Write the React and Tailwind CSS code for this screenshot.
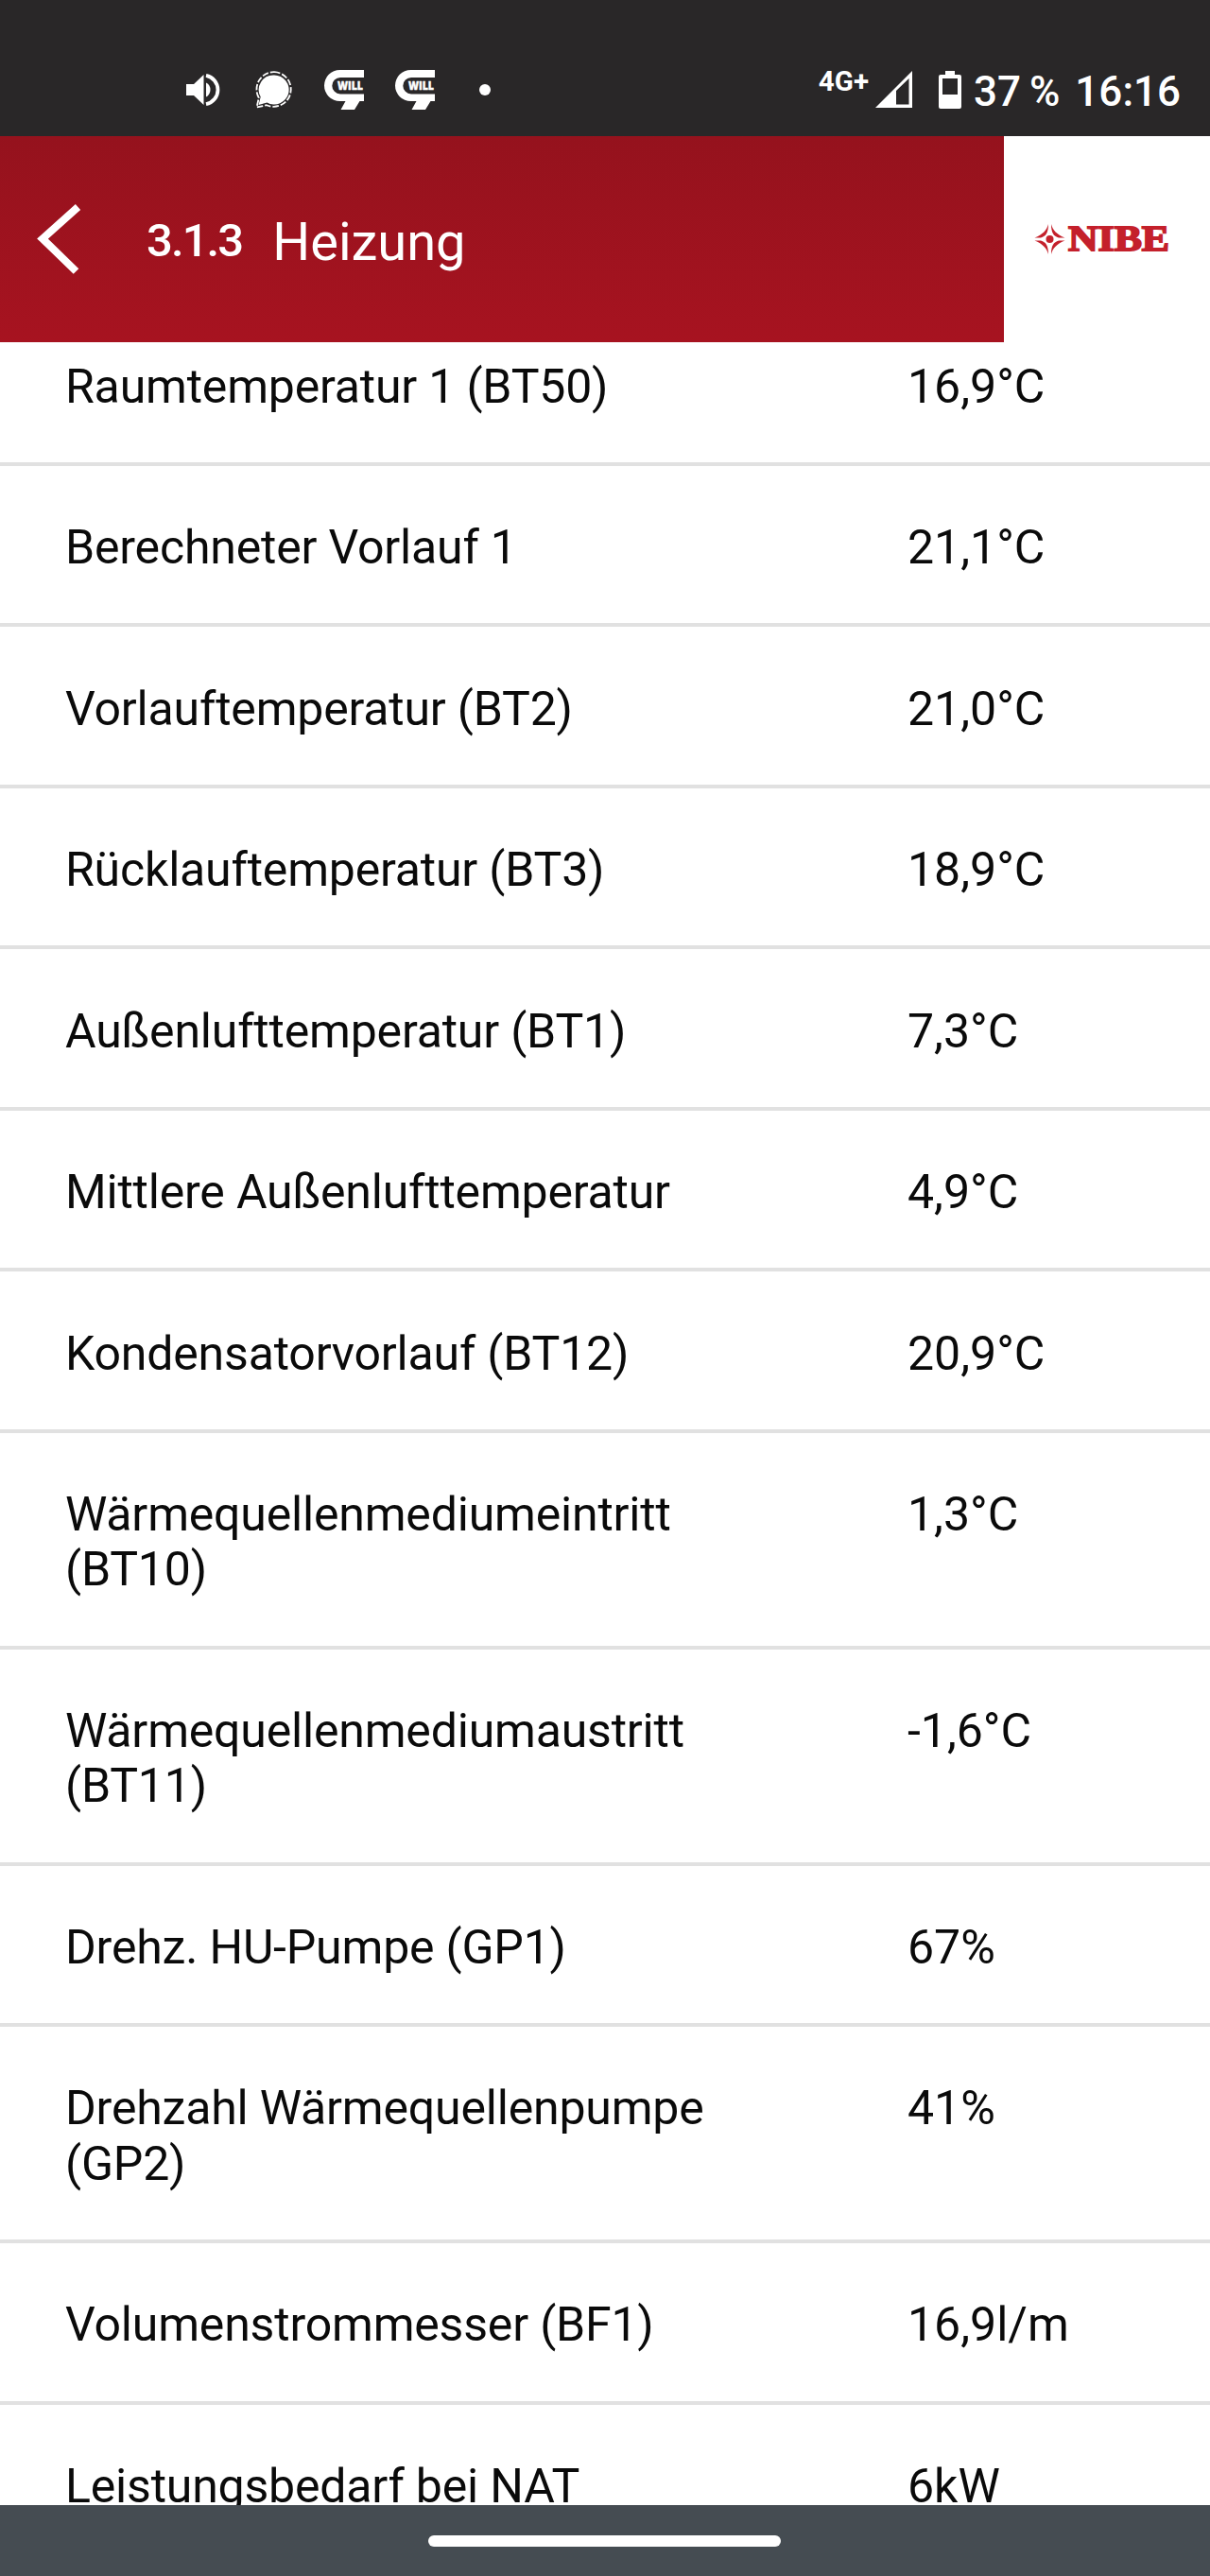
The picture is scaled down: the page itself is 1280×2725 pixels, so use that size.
import React from 'react';

const readings = [
  { label: 'Raumtemperatur 1 (BT50)', value: '16,9°C' },
  { label: 'Berechneter Vorlauf 1', value: '21,1°C' },
  { label: 'Vorlauftemperatur (BT2)', value: '21,0°C' },
  { label: 'Rücklauftemperatur (BT3)', value: '18,9°C' },
  { label: 'Außenlufttemperatur (BT1)', value: '7,3°C' },
  { label: 'Mittlere Außenlufttemperatur', value: '4,9°C' },
  { label: 'Kondensatorvorlauf (BT12)', value: '20,9°C' },
  { label: 'Wärmequellenmediumeintritt (BT10)', value: '1,3°C' },
  { label: 'Wärmequellenmediumaustritt (BT11)', value: '-1,6°C' },
  { label: 'Drehz. HU-Pumpe (GP1)', value: '67%' },
  { label: 'Drehzahl Wärmequellenpumpe (GP2)', value: '41%' },
  { label: 'Volumenstrommesser (BF1)', value: '16,9l/m' },
  { label: 'Leistungsbedarf bei NAT', value: '6kW' },
];

const VolumeIcon = () => (
  <svg width="36" height="36" viewBox="0 0 36 36" fill="white">
    <path d="M0 12h8L18.500 2v32L8 24H0z" />
    <path d="M21 10.500a8.500 8.500 0 0 1 0 15z" />
    <path d="M21 2.800a15.500 15.500 0 0 1 0 30.400" fill="none" stroke="white" strokeWidth="3.800" />
  </svg>
);

const ChatIcon = () => (
  <svg width="40" height="42" viewBox="0 0 40 42">
    <path d="M20 5.500a15.500 15.500 0 1 1-7.500 29L3.500 37l2.200-8.500A15.500 15.500 0 0 1 20 5.500z" fill="white" />
    <path
      d="M20 2.200a18.300 18.300 0 1 1-8 35L1.600 39.500 3.800 29.500A18.300 18.300 0 0 1 20 2.200z"
      fill="none"
      stroke="white"
      strokeWidth="1.800"
      strokeDasharray="6.500 2"
    />
  </svg>
);

const WillIcon = () => (
  <svg width="43" height="42" viewBox="0 0 43 42">
    <path d="M42 0v8H17a8.700 8.700 0 0 0 0 17.400h25v7.600l-4.500 0-5.500 9H17.500l5-9H16.500a16.500 16.500 0 0 1 0-33z" fill="white" />
    <text
      x="14"
      y="21"
      textLength="27"
      lengthAdjust="spacingAndGlyphs"
      fill="white"
      stroke="white"
      strokeWidth="0.400"
      className="font-['Open_Sans',sans-serif] text-[11.500px] font-extrabold"
    >
      WILL
    </text>
  </svg>
);

const SignalIcon = () => (
  <svg width="40" height="40" viewBox="0 0 40 40">
    <path d="M0 39L39 0v39z M22 21v14.500h13.500V8z" fill="white" fillRule="evenodd" />
  </svg>
);

const BatteryIcon = () => (
  <svg width="24" height="40" viewBox="0 0 24 40">
    <path
      d="M7 0h10v4h5a2 2 0 0 1 2 2v32a2 2 0 0 1-2 2H2a2 2 0 0 1-2-2V6a2 2 0 0 1 2-2h5z M4 8v17h16V8z"
      fill="white"
      fillRule="evenodd"
    />
  </svg>
);

const StatusBar = () => (
  <div className="flex h-[144px] shrink-0 items-start justify-between bg-[#292728] pt-[74px] pl-[197px] pr-[31px] text-white">
    <div className="flex h-[42px] items-center">
      <VolumeIcon />
      <div className="ml-[37px]">
        <ChatIcon />
      </div>
      <div className="ml-[33px]">
        <WillIcon />
      </div>
      <div className="ml-[32px]">
        <WillIcon />
      </div>
      <div className="ml-[46px] size-[12px] rounded-full bg-white" />
    </div>
    <div className="flex h-[42px] items-center font-medium whitespace-nowrap">
      <span className="mb-[18px] text-[29.500px] leading-[28px] font-bold">4G+</span>
      <div className="ml-[7px]">
        <SignalIcon />
      </div>
      <div className="ml-[27px]">
        <BatteryIcon />
      </div>
      <span className="mt-[3px] ml-[13px] text-[44px] leading-[44px]">37&thinsp;%</span>
      <span className="mt-[3px] ml-[16px] text-[44px] leading-[44px]">16:16</span>
    </div>
  </div>
);

const NibeLogo = () => (
  <svg width="170" height="60" viewBox="0 -14 170 60" fill="#c4202b">
    <circle cx="16.500" cy="16" r="4" />
    {/* Four curved arms around the centre dot */}
    <path d="M15 0C13.500 6.500 9 11 0.500 14.500H7C12.500 13 15 9 15 0z" />
    <path d="M18 0C19.500 6.500 24 11 32.500 14.500H26C20.500 13 18 9 18 0z" />
    <path d="M15 32C13.500 25.500 9 21 0.500 17.500H7C12.500 19 15 23 15 32z" />
    <path d="M18 32C19.500 25.500 24 21 32.500 17.500H26C20.500 19 18 23 18 32z" />
    <text
      x="36"
      y="28"
      textLength="107"
      lengthAdjust="spacingAndGlyphs"
      stroke="#c4202b"
      strokeWidth="1.800"
      className="font-['Liberation_Serif',serif] text-[38px] font-bold"
    >
      NIBE
    </text>
  </svg>
);

const Header = () => (
  <div className="flex h-[218px] shrink-0">
    <div className="flex w-[1062px] items-center bg-linear-to-b from-[#95121d] to-[#a71320] pl-[38px] text-white">
      <svg width="48" height="76" viewBox="0 0 48 76" fill="none" stroke="white" strokeWidth="8">
        <path d="M44.500 4L7 37.500 42.500 72" />
      </svg>
      <div className="mt-[5px] flex items-center">
        <span className="ml-[69px] pb-px text-[49px] font-medium tracking-[-1.900px]">3.1.3</span>
        <span className="ml-[32px] text-[56px]">Heizung</span>
      </div>
    </div>
    <div className="flex flex-1 items-center bg-white pl-[32px]">
      <NibeLogo />
    </div>
  </div>
);

const ReadingRow = ({ label, value }) => (
  <div className="flex border-b-4 border-[#e1e1e1] pt-[57.200px] pb-[50.900px] pl-[69px] text-[50px] leading-[58.400px] text-[#0a0a0a]">
    <div className="w-[720px] pr-4 tracking-[-0.190px]">{label}</div>
    <div className="ml-[171px]">{value}</div>
  </div>
);

export default function App() {
  return (
    <div className="flex h-[2725px] w-[1280px] flex-col overflow-hidden bg-white font-['Roboto',sans-serif]">
      <StatusBar />
      <Header />
      {/* List is scrolled slightly, so the first row is cut off by the header */}
      <div className="min-h-0 flex-1 overflow-hidden">
        <div className="-mt-[39.500px]">
          {readings.map((reading) => (
            <ReadingRow key={reading.label} label={reading.label} value={reading.value} />
          ))}
        </div>
      </div>
      <div className="flex h-[75px] shrink-0 justify-center bg-[#454c52] pt-[32px]">
        <div className="mr-[2px] h-[12px] w-[373px] rounded-full bg-white" />
      </div>
    </div>
  );
}
